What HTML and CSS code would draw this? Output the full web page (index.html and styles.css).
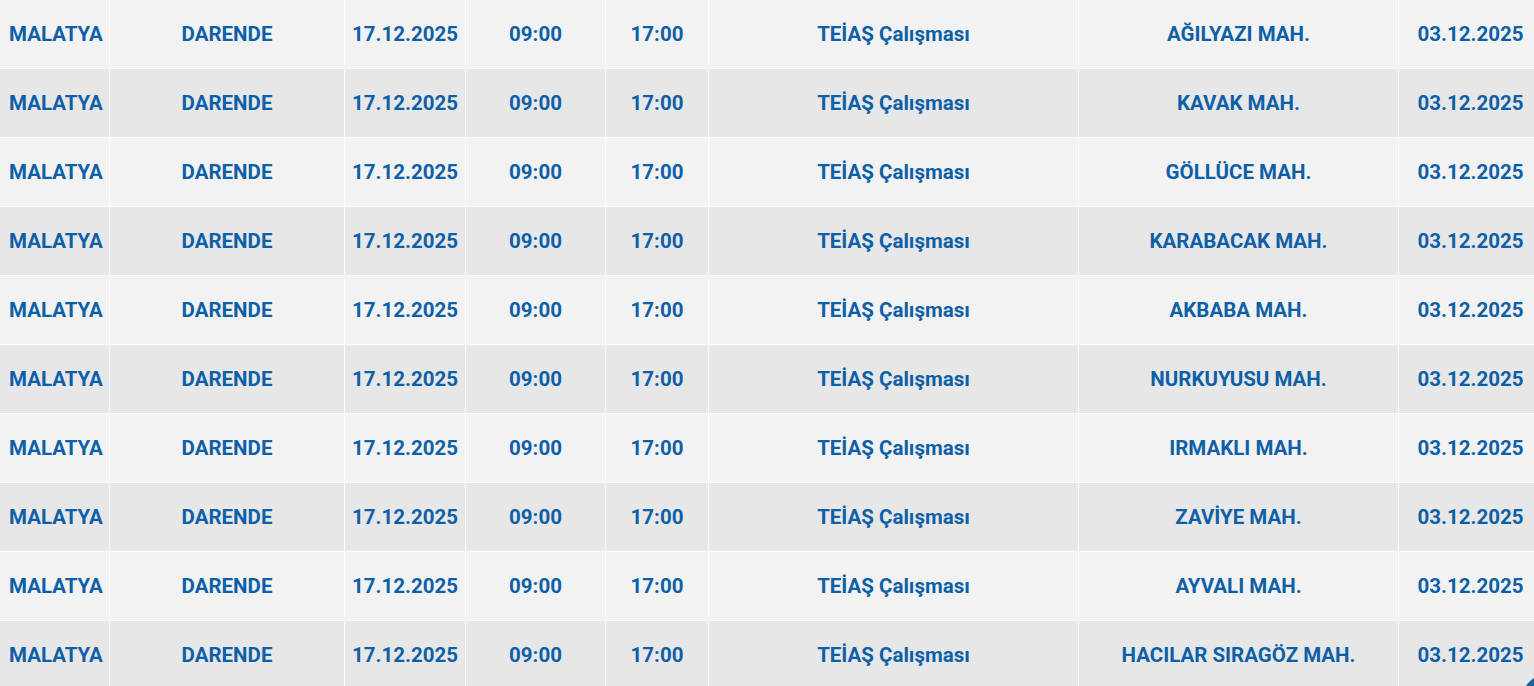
FILE: index.html
```html
<!DOCTYPE html>
<html lang="tr">
<head>
<meta charset="utf-8">
<title>Kesinti Listesi</title>
<link rel="stylesheet" href="styles.css">
</head>
<body>
<div class="wrap">
<table class="outages">
<colgroup>
<col class="c1"><col class="c2"><col class="c3"><col class="c4"><col class="c5"><col class="c6"><col class="c7"><col class="c8">
</colgroup>
<tbody>
<tr><td class="city">MALATYA</td><td>DARENDE</td><td>17.12.2025</td><td>09:00</td><td>17:00</td><td>TEİAŞ Çalışması</td><td>AĞILYAZI MAH.</td><td>03.12.2025</td></tr>
<tr><td class="city">MALATYA</td><td>DARENDE</td><td>17.12.2025</td><td>09:00</td><td>17:00</td><td>TEİAŞ Çalışması</td><td>KAVAK MAH.</td><td>03.12.2025</td></tr>
<tr><td class="city">MALATYA</td><td>DARENDE</td><td>17.12.2025</td><td>09:00</td><td>17:00</td><td>TEİAŞ Çalışması</td><td>GÖLLÜCE MAH.</td><td>03.12.2025</td></tr>
<tr><td class="city">MALATYA</td><td>DARENDE</td><td>17.12.2025</td><td>09:00</td><td>17:00</td><td>TEİAŞ Çalışması</td><td>KARABACAK MAH.</td><td>03.12.2025</td></tr>
<tr><td class="city">MALATYA</td><td>DARENDE</td><td>17.12.2025</td><td>09:00</td><td>17:00</td><td>TEİAŞ Çalışması</td><td>AKBABA MAH.</td><td>03.12.2025</td></tr>
<tr><td class="city">MALATYA</td><td>DARENDE</td><td>17.12.2025</td><td>09:00</td><td>17:00</td><td>TEİAŞ Çalışması</td><td>NURKUYUSU MAH.</td><td>03.12.2025</td></tr>
<tr><td class="city">MALATYA</td><td>DARENDE</td><td>17.12.2025</td><td>09:00</td><td>17:00</td><td>TEİAŞ Çalışması</td><td>IRMAKLI MAH.</td><td>03.12.2025</td></tr>
<tr><td class="city">MALATYA</td><td>DARENDE</td><td>17.12.2025</td><td>09:00</td><td>17:00</td><td>TEİAŞ Çalışması</td><td>ZAVİYE MAH.</td><td>03.12.2025</td></tr>
<tr><td class="city">MALATYA</td><td>DARENDE</td><td>17.12.2025</td><td>09:00</td><td>17:00</td><td>TEİAŞ Çalışması</td><td>AYVALI MAH.</td><td>03.12.2025</td></tr>
<tr><td class="city">MALATYA</td><td>DARENDE</td><td>17.12.2025</td><td>09:00</td><td>17:00</td><td>TEİAŞ Çalışması</td><td>HACILAR SIRAGÖZ MAH.</td><td>03.12.2025</td></tr>
</tbody>
</table>
<div class="corner"></div>
</div>
</body>
</html>
```
FILE: styles.css
```css
html, body {
  margin: 0;
  padding: 0;
  background: #ffffff;
  overflow: hidden;
}
.wrap {
  width: 1534px;
  height: 686px;
  overflow: hidden;
  position: relative;
}
.outages {
  border-collapse: collapse;
  table-layout: fixed;
  width: 1543px;
  margin-top: -1px;
  margin-left: -1px;
  font-family: Roboto, "Liberation Sans", sans-serif;
  font-weight: 700;
  font-size: 20.5px;
  color: #0d5fa7;
}
.c1 { width: 110px; }
.c2 { width: 235px; }
.c3 { width: 121px; }
.c4 { width: 140px; }
.c5 { width: 103px; }
.c6 { width: 370px; }
.c7 { width: 320px; }
.c8 { width: 144px; }
.outages td {
  border: 1px solid #ffffff;
  height: 68px;
  padding: 0;
  text-align: center;
  vertical-align: middle;
  white-space: nowrap;
}
.outages td.city {
  text-align: left;
  padding-left: 9px;
}
.outages tr:nth-child(odd) td { background: #f2f2f2; }
.outages tr:nth-child(even) td { background: #e7e7e7; }
.corner {
  position: absolute;
  right: -40px;
  bottom: -40px;
  width: 52px;
  height: 52px;
  border-radius: 50%;
  background: #1d5f9c;
}
```
